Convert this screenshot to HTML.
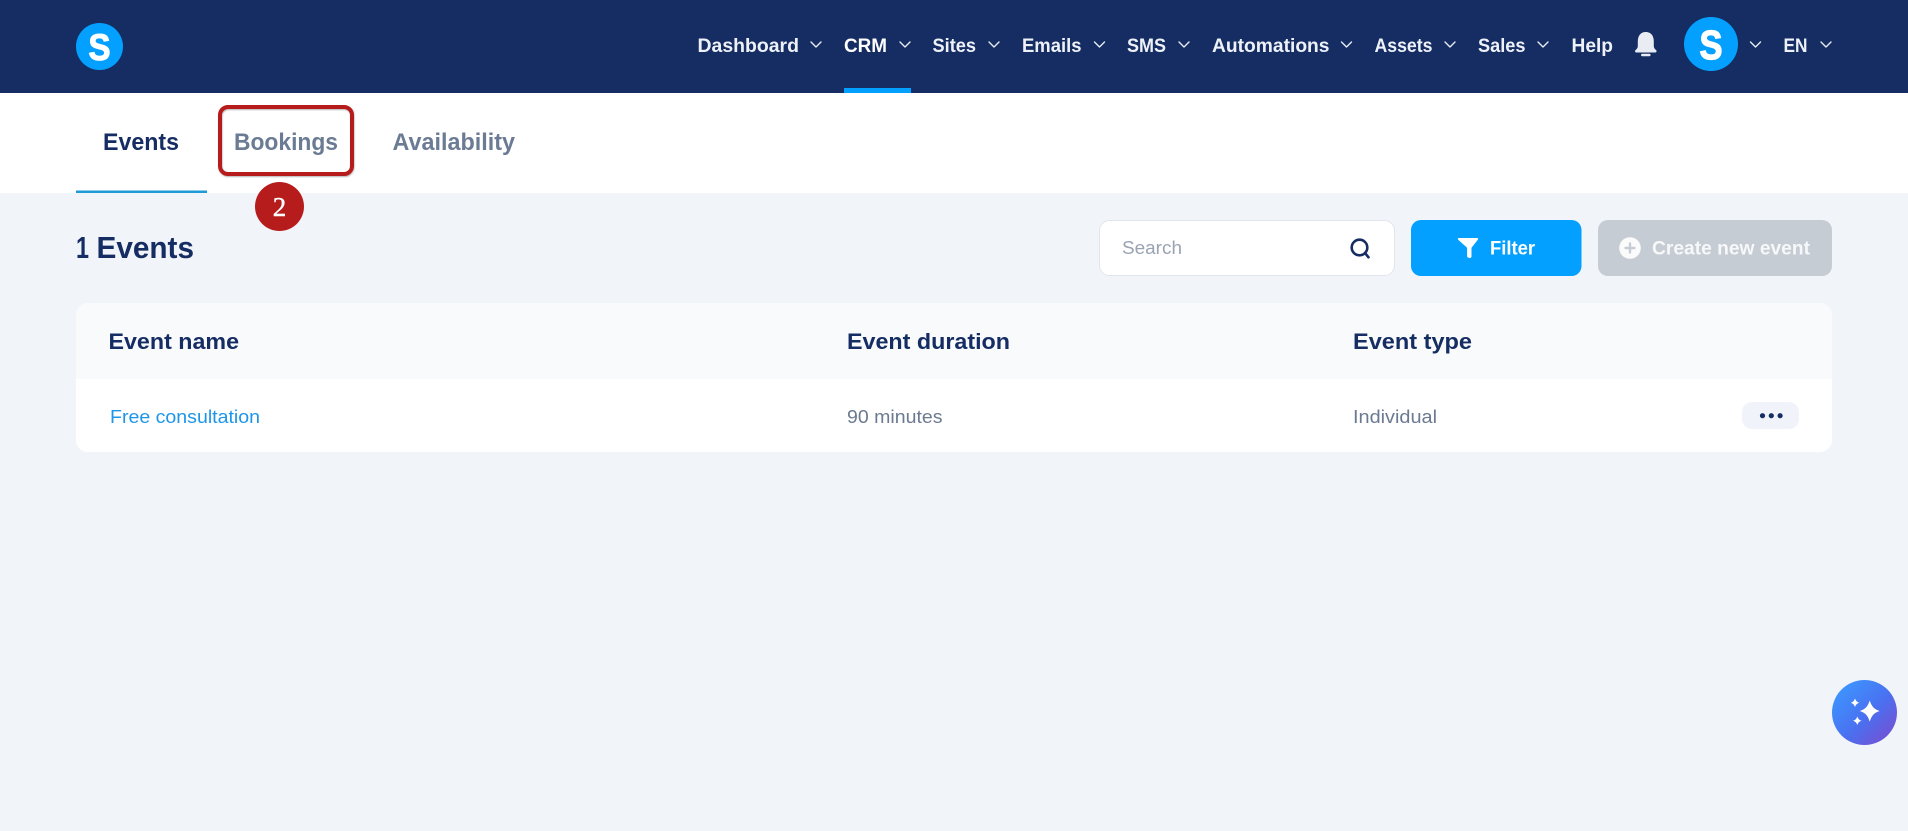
<!DOCTYPE html>
<html lang="en">
<head>
<meta charset="utf-8">
<title>Events</title>
<style>
html,body{margin:0;padding:0;width:1908px;height:831px;overflow:hidden;background:#f1f4f9}
svg{display:block}
text{font-family:"Liberation Sans",sans-serif}
.nav{font-size:19px;font-weight:700;fill:#eef2f8}
.chev{fill:none;stroke:#e8edf5;stroke-width:1.4;stroke-linecap:round;stroke-linejoin:round}
.tab{font-size:24px;font-weight:700}
.th{font-size:22px;font-weight:700;fill:#152d63}
.td{font-size:18.500px;fill:#6b7a90}
.logo{font-weight:700;fill:#fff;stroke:#fff}
</style>
</head>
<body>
<svg xmlns="http://www.w3.org/2000/svg" width="1908" height="831" viewBox="0 0 1908 831">
<defs>
<linearGradient id="g" x1="0" y1="0" x2="1" y2="1"><stop offset="0.1" stop-color="#3d96ff"/><stop offset="0.55" stop-color="#4a70f0"/><stop offset="1" stop-color="#7f48cc"/></linearGradient>
<filter id="sh" x="-10%" y="-10%" width="120%" height="120%"><feDropShadow dx="0.5" dy="1" stdDeviation="0.8" flood-color="#000" flood-opacity="0.3"/></filter>
</defs>
<rect width="1908" height="831" fill="#f1f4f9"/>

<!-- Header -->
<rect width="1908" height="93" fill="#152d63"/>
<circle cx="99.500" cy="46.500" r="23.500" fill="#04a0ff"/>
<text class="logo" x="88.500" y="60" font-size="37" stroke-width="1.100" textLength="22" lengthAdjust="spacingAndGlyphs">S</text>

<text class="nav" x="697.500" y="52" textLength="101.500" lengthAdjust="spacingAndGlyphs">Dashboard</text>
<polyline class="chev" points="811,42 816,47 821,42"/>
<text class="nav" x="844" y="52" textLength="43" lengthAdjust="spacingAndGlyphs" style="fill:#fff">CRM</text>
<polyline class="chev" points="900,42 905,47 910,42"/>
<rect x="844" y="88" width="67" height="5" fill="#04a0ff"/>
<text class="nav" x="932.500" y="52" textLength="43.500" lengthAdjust="spacingAndGlyphs">Sites</text>
<polyline class="chev" points="989,42 994,47 999,42"/>
<text class="nav" x="1022" y="52" textLength="59.500" lengthAdjust="spacingAndGlyphs">Emails</text>
<polyline class="chev" points="1094.500,42 1099.500,47 1104.500,42"/>
<text class="nav" x="1127" y="52" textLength="39" lengthAdjust="spacingAndGlyphs">SMS</text>
<polyline class="chev" points="1179,42 1184,47 1189,42"/>
<text class="nav" x="1212" y="52" textLength="117.500" lengthAdjust="spacingAndGlyphs">Automations</text>
<polyline class="chev" points="1341.500,42 1346.500,47 1351.500,42"/>
<text class="nav" x="1374.500" y="52" textLength="58" lengthAdjust="spacingAndGlyphs">Assets</text>
<polyline class="chev" points="1445,42 1450,47 1455,42"/>
<text class="nav" x="1478" y="52" textLength="47.500" lengthAdjust="spacingAndGlyphs">Sales</text>
<polyline class="chev" points="1538,42 1543,47 1548,42"/>
<text class="nav" x="1571.500" y="52" textLength="41.500" lengthAdjust="spacingAndGlyphs">Help</text>

<!-- Bell -->
<path d="M1645.800 32c5.200 0 8 3.800 8 9.500v4.800c0 1.800 1.200 2.900 2.300 3.800.9.800.5 2.400-.8 2.400h-19c-1.300 0-1.700-1.600-.8-2.400 1.100-.9 2.300-2 2.300-3.800v-4.800c0-5.700 2.800-9.500 8-9.500z" fill="#e9edf3"/>
<rect x="1641" y="53.800" width="9.600" height="2.400" rx="1.200" fill="#e9edf3"/>

<circle cx="1711" cy="44" r="27" fill="#04a0ff"/>
<text class="logo" x="1699.500" y="59" font-size="41" stroke-width="1.300" textLength="23" lengthAdjust="spacingAndGlyphs">S</text>
<polyline class="chev" points="1750.500,42 1755.500,47 1760.500,42"/>
<text class="nav" x="1783.500" y="52" textLength="24" lengthAdjust="spacingAndGlyphs">EN</text>
<polyline class="chev" points="1821,42 1826,47 1831,42"/>

<!-- Tabs -->
<rect y="93" width="1908" height="100" fill="#fff"/>
<text class="tab" x="103" y="150" fill="#152d63" textLength="76" lengthAdjust="spacingAndGlyphs">Events</text>
<rect x="76" y="190.500" width="131" height="2.500" fill="#1e9ad6"/>
<text class="tab" x="234" y="150" fill="#6b7b94" textLength="104" lengthAdjust="spacingAndGlyphs">Bookings</text>
<text class="tab" x="392.500" y="150" fill="#6b7b94" textLength="122.500" lengthAdjust="spacingAndGlyphs">Availability</text>

<!-- Annotation -->
<rect x="220" y="107" width="132" height="67" rx="8" fill="none" stroke="#b71c1c" stroke-width="4" filter="url(#sh)"/>
<circle cx="279.500" cy="206.500" r="24.500" fill="#b71c1c"/>
<text x="279.500" y="216" font-size="27" text-anchor="middle" fill="#fff" stroke="#fff" stroke-width="0.4" style="font-family:'Liberation Serif',serif">2</text>

<!-- Toolbar -->
<text x="76" y="258" font-size="31" font-weight="700" fill="#152d63" textLength="13" lengthAdjust="spacingAndGlyphs">1</text>
<text x="96.500" y="258" font-size="31" font-weight="700" fill="#152d63" textLength="97.500" lengthAdjust="spacingAndGlyphs">Events</text>

<rect x="1099.500" y="220.500" width="295" height="55" rx="10" fill="#fff" stroke="#e1e5ec"/>
<text x="1122" y="254" font-size="18" fill="#9aa3b2" textLength="60" lengthAdjust="spacingAndGlyphs">Search</text>
<circle cx="1359.500" cy="247.500" r="7.800" fill="none" stroke="#152d63" stroke-width="2.600"/>
<line x1="1365" y1="253" x2="1368.500" y2="257.300" stroke="#152d63" stroke-width="2.600" stroke-linecap="round"/>

<rect x="1411" y="220" width="170.500" height="56" rx="10" fill="#04a0ff"/>
<path d="M1459 238h18c1 0 1.500 1 .8 1.800l-6.300 8v8.700c0 1.500-2.300 2-3.600 1-.5-.4-.8-.9-.8-1.500v-8.200l-8.900-8c-.7-.8-.2-1.800.8-1.800z" fill="#fff"/>
<text x="1490" y="254.500" font-size="19" font-weight="700" fill="#fff" textLength="45" lengthAdjust="spacingAndGlyphs">Filter</text>

<rect x="1598" y="220" width="234" height="56" rx="10" fill="#c5ccd4"/>
<circle cx="1630" cy="248" r="10.800" fill="#fff" fill-opacity=".92"/>
<path d="M1630 243.500v9M1625.500 248h9" stroke="#c5ccd4" stroke-width="2.400" stroke-linecap="round"/>
<text x="1652" y="254.500" font-size="19" font-weight="700" fill="#fff" fill-opacity=".85" textLength="158" lengthAdjust="spacingAndGlyphs">Create new event</text>

<!-- Table -->
<rect x="76" y="303" width="1756" height="149" rx="12" fill="#fff"/>
<path d="M76 379v-64a12 12 0 0 1 12-12h1732a12 12 0 0 1 12 12v64z" fill="#f8fafc"/>
<text class="th" x="108.500" y="349" textLength="130.500" lengthAdjust="spacingAndGlyphs">Event name</text>
<text class="th" x="847" y="349" textLength="163" lengthAdjust="spacingAndGlyphs">Event duration</text>
<text class="th" x="1353" y="349" textLength="119" lengthAdjust="spacingAndGlyphs">Event type</text>

<text class="td" x="110" y="423" style="fill:#1e96e8" textLength="150" lengthAdjust="spacingAndGlyphs">Free consultation</text>
<text class="td" x="847" y="423" textLength="95.500" lengthAdjust="spacingAndGlyphs">90 minutes</text>
<text class="td" x="1353" y="423" textLength="84" lengthAdjust="spacingAndGlyphs">Individual</text>

<rect x="1742" y="402" width="57" height="27" rx="10" fill="#f0f3f9"/>
<circle cx="1762.500" cy="415.700" r="2.600" fill="#152d63"/>
<circle cx="1771.300" cy="415.700" r="2.600" fill="#152d63"/>
<circle cx="1780.100" cy="415.700" r="2.600" fill="#152d63"/>

<!-- AI button -->
<circle cx="1864.500" cy="712.500" r="32.500" fill="url(#g)"/>
<path d="M1869.700 700.500c2 6 4 8.500 10 10.500-6 2-8 4.500-10 10.600-2-6.100-4-8.600-10-10.600 6-2 8-4.500 10-10.500z" fill="#fff"/>
<path d="M1855 698.500c1 2.600 1.800 3.400 4.300 4.300-2.500.9-3.300 1.700-4.300 4.300-1-2.600-1.800-3.400-4.300-4.300 2.500-.9 3.300-1.700 4.300-4.300z" fill="#fff"/>
<path d="M1857.300 716.500c1 2.600 1.800 3.400 4.300 4.300-2.500.9-3.300 1.700-4.300 4.300-1-2.600-1.800-3.400-4.300-4.300 2.500-.9 3.300-1.700 4.300-4.300z" fill="#fff"/>
</svg>
</body>
</html>
